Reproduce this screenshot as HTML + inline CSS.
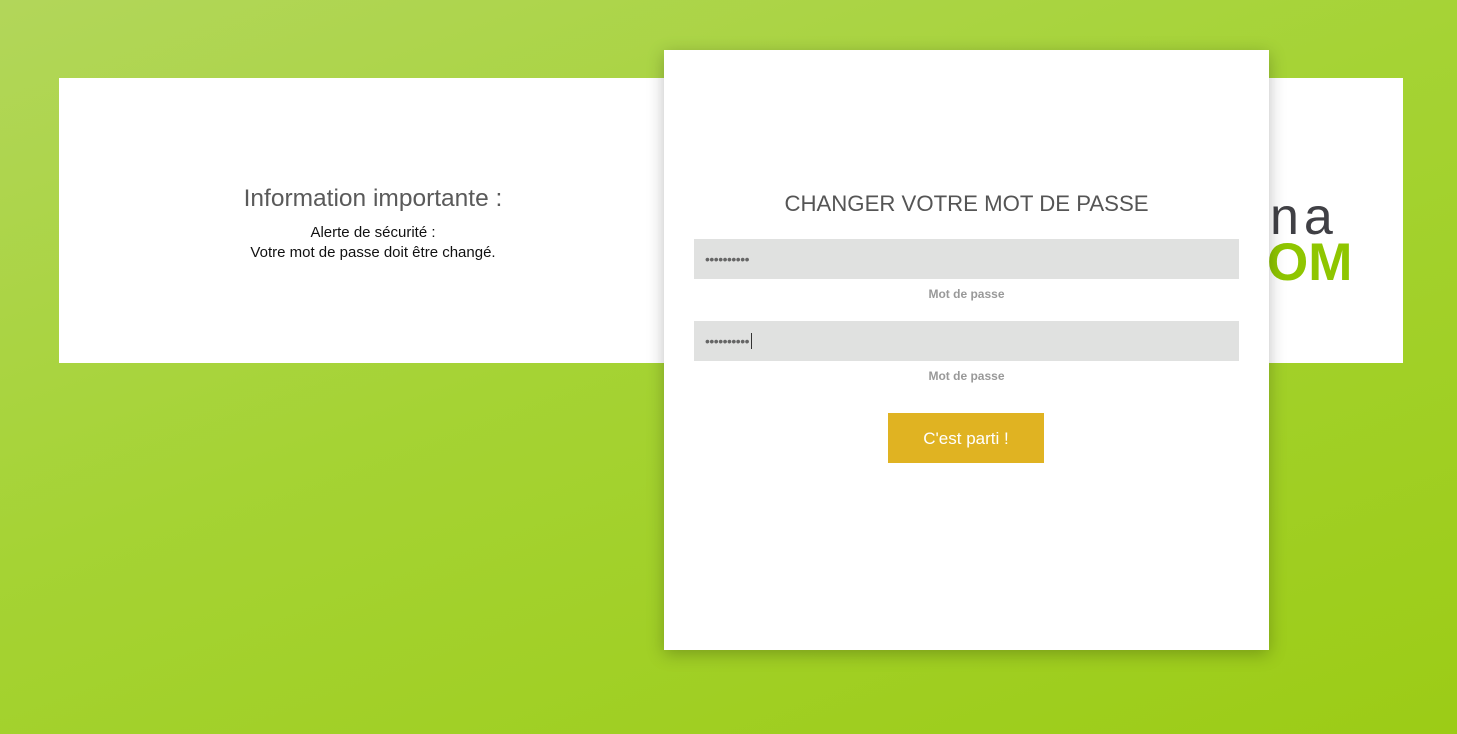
<!DOCTYPE html>
<html><head><meta charset="utf-8"><style>
html,body{margin:0;padding:0;}
body{width:1457px;height:734px;position:relative;overflow:hidden;font-family:"Liberation Sans",sans-serif;
background:linear-gradient(160deg,#b2d65a 0%,#a5d334 45%,#9ccc16 100%);}
.band{position:absolute;left:59px;top:78px;width:1344px;height:285px;background:#fff;}
.info{position:absolute;left:59px;width:628px;top:185px;text-align:center;}
.info h2{margin:0;font-weight:normal;font-size:24.5px;color:#5a5a5a;}
.info p{margin:10px 0 0;font-size:15px;line-height:20px;color:#111;}
.logo{position:absolute;left:1270px;top:190px;font-weight:bold;}
.logo .a{position:absolute;left:0;top:2px;font-size:52px;color:#404045;font-weight:normal;letter-spacing:5px;line-height:50px;}
.logo .b{position:absolute;left:-3px;top:48px;font-size:53px;color:#8fc600;line-height:50px;}
.card{position:absolute;left:664px;top:50px;width:605px;height:600px;background:#fff;box-shadow:0 4px 16px rgba(0,0,0,.25);}
.card h1{position:absolute;top:141px;left:0;width:100%;margin:0;text-align:center;font-weight:normal;font-size:22.2px;color:#555;}
.inp{position:absolute;left:30px;width:545px;height:40px;background:#e0e1e0;color:#666;font-size:14px;line-height:40px;padding-left:11px;box-sizing:border-box;letter-spacing:-0.5px;}
.lab{position:absolute;left:0;width:100%;text-align:center;font-size:12px;font-weight:bold;color:#999;}
.btn{position:absolute;left:224px;top:363px;width:156px;height:50px;background:#e0b322;color:#fff;font-size:17px;text-align:center;line-height:52px;}
</style></head><body>
<div class="band"></div>
<div class="info"><h2>Information importante :</h2><p>Alerte de sécurité :<br>Votre mot de passe doit être changé.</p></div>
<div class="logo"><div class="a">na</div><div class="b">OM</div></div>
<div class="card">
<h1>CHANGER VOTRE MOT DE PASSE</h1>
<div class="inp" style="top:189px">••••••••••</div>
<div class="lab" style="top:237px">Mot de passe</div>
<div class="inp" style="top:271px">••••••••••<span style="border-left:1px solid #333;margin-left:2px"></span></div>
<div class="lab" style="top:319px">Mot de passe</div>
<div class="btn">C'est parti !</div>
</div>
</body></html>
